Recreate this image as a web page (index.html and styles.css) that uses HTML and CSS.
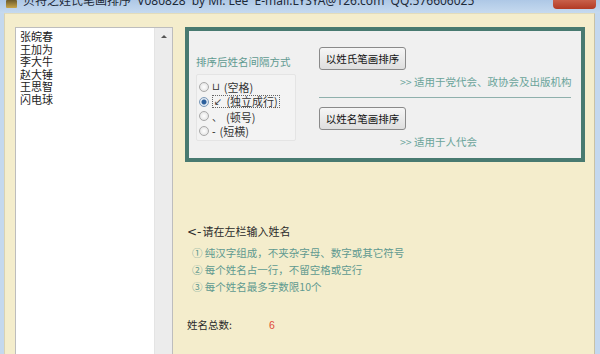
FILE: index.html
```html
<!DOCTYPE html>
<html lang="zh-CN">
<head>
    <meta charset="UTF-8">
    <title>贝特之姓氏笔画排序</title>
    <link rel="stylesheet" href="styles.css">
</head>
<body>
    <div class="window">
        <div class="titlebar">
            <span class="app-icon"></span>
            <span class="title">贝特之姓氏笔画排序&nbsp; V080828&nbsp; by Mr. Lee&nbsp; E-mail:LYSYA@126.com&nbsp; QQ:576606025</span>
            <span class="close-btn"></span>
        </div>

        <div class="client">
            <div class="listbox">
                <div class="names">
                    <div>张皖春</div>
                    <div>王加为</div>
                    <div>李大牛</div>
                    <div>赵大锤</div>
                    <div>王思智</div>
                    <div>闪电球</div>
                </div>
                <div class="scrollbar"><span class="arrow-up"></span></div>
            </div>

            <div class="main">
                <div class="frame">
                    <div class="sep-col">
                        <div class="sep-label">排序后姓名间隔方式</div>
                        <div class="radio-group">
                            <label class="radio"><span class="dot"></span><span class="sym">⊔</span><span class="opt">(空格)</span></label>
                            <label class="radio checked"><span class="dot"></span><span class="focus"><span class="sym">↙</span><span class="opt">(独立成行)</span></span></label>
                            <label class="radio"><span class="dot"></span><span class="sym">、</span><span class="opt">(顿号)</span></label>
                            <label class="radio"><span class="dot"></span><span class="sym">-</span><span class="opt">(短横)</span></label>
                        </div>
                    </div>
                    <div class="sort-col">
                        <button class="btn">以姓氏笔画排序</button>
                        <div class="note">&gt;&gt; 适用于党代会、政协会及出版机构</div>
                        <div class="divider"></div>
                        <button class="btn">以姓名笔画排序</button>
                        <div class="note">&gt;&gt; 适用于人代会</div>
                    </div>
                </div>

                <div class="hint"><span class="lt">&lt;-</span>请在左栏输入姓名</div>
                <ul class="rules">
                    <li>① 纯汉字组成，不夹杂字母、数字或其它符号</li>
                    <li>② 每个姓名占一行，不留空格或空行</li>
                    <li>③ 每个姓名最多字数限10个</li>
                </ul>

                <div class="total">
                    <span class="total-label">姓名总数:</span>
                    <span class="total-value">6</span>
                </div>
            </div>
        </div>
    </div>
</body>
</html>
```

FILE: styles.css
```css
body {
    margin: 0;
    width: 600px;
    height: 354px;
    overflow: hidden;
    background-color: #c4d8ee;
    font-family: "Noto Sans CJK SC", "Noto Sans", sans-serif;
}
.window {
    display: flex;
    flex-direction: column;
    height: 100%;
}
.titlebar {
    height: 13px;
    display: flex;
    align-items: flex-start;
    background: linear-gradient(#aec8e6, #c6daef);
    position: relative;
    overflow: hidden;
}
.app-icon {
    width: 11px;
    height: 8px;
    margin: 0 0 0 6px;
    background: linear-gradient(#6b5a2a, #c8a64a);
    border-radius: 1px;
}
.title {
    margin: -6px 0 0 6px;
    font-family: "Noto Sans", "Noto Sans CJK SC", sans-serif;
    font-size: 12px;
    line-height: 14px;
    color: #1e2a38;
    white-space: nowrap;
}
.close-btn {
    position: absolute;
    right: 4px;
    top: 0;
    width: 43px;
    height: 9px;
    border-radius: 0 0 4px 4px;
    background: linear-gradient(#c9604a, #b23a24);
}
.client {
    flex: 1;
    display: flex;
    margin: 0 5px 0 4px;
    padding: 13px 0 0 10px;
    background-color: #f4edcc;
    border-top: 1px solid #e2dcbc;
    border-left: 1px solid #d8d2b4;
    border-right: 1px solid #c8c2a6;
    min-height: 0;
}
.listbox {
    width: 156px;
    height: 340px;
    display: flex;
    background-color: white;
    border: 1px solid #bdbdbd;
    flex-shrink: 0;
}
.names {
    flex: 1;
    padding: 2px 4px;
    font-size: 11px;
    line-height: 12.6px;
    color: #222;
}
.scrollbar {
    width: 17px;
    background-color: #ececec;
    border-left: 1px solid #e4e4e4;
    display: flex;
    justify-content: center;
}
.arrow-up {
    margin-top: 7px;
    width: 0;
    height: 0;
    border-left: 3px solid transparent;
    border-right: 3px solid transparent;
    border-bottom: 3px solid #555;
}
.main {
    margin-left: 12px;
    display: flex;
    flex-direction: column;
}
.frame {
    width: 392px;
    height: 127px;
    border: 4px solid #487a70;
    background-color: #f0f0f0;
    display: flex;
    font-size: 10.5px;
}
.sep-col {
    width: 123px;
    padding: 24px 0 0 7px;
    box-sizing: border-box;
}
.sep-label {
    color: #5f9a90;
    line-height: 14px;
}
.radio-group {
    margin-top: 5px;
    width: 100px;
    height: 67px;
    padding: 5px 0 0 2px;
    box-sizing: border-box;
    border: 1px solid #e4e4e4;
    border-radius: 2px;
    background-color: #f3f3f3;
    display: flex;
    flex-direction: column;
    gap: 1px;
}
.radio {
    display: flex;
    align-items: center;
    height: 13.8px;
    font-size: 11px;
    color: #333;
    white-space: nowrap;
}
.dot {
    width: 10px;
    height: 10px;
    margin-right: 3px;
    border-radius: 50%;
    border: 1px solid #a8a8a8;
    background: radial-gradient(#ffffff, #dcdcdc);
    box-sizing: border-box;
    flex-shrink: 0;
}
.checked .dot {
    background: radial-gradient(#2c5f9c 0, #2c5f9c 2px, #dfe8f2 3px);
    border-color: #7a98b8;
}
.focus {
    display: flex;
    align-items: center;
    border: 1px dotted #666;
    padding: 0 1px;
    line-height: 11px;
}
.sym {
    font-family: "DejaVu Sans", sans-serif;
    font-size: 10px;
}
.opt {
    margin-left: 4px;
}
.sort-col {
    padding: 16px 0 0 7px;
    display: flex;
    flex-direction: column;
    align-items: flex-start;
}
.btn {
    width: 87px;
    height: 23px;
    padding: 0;
    font-family: inherit;
    font-size: 10.5px;
    color: #111;
    border: 1px solid #8a8a8a;
    border-radius: 3px;
    background: linear-gradient(#f6f6f6, #dedede);
}
.note {
    margin: 5px 0 0 81px;
    color: #6aa49a;
    line-height: 14px;
    white-space: nowrap;
}
.divider {
    width: 252px;
    height: 1px;
    margin: 8px 0 9px;
    background-color: #8fb0ac;
}
.hint {
    margin: 62px 0 0 2px;
    font-size: 11px;
    color: #2a2a2a;
    line-height: 14px;
}
.lt {
    font-family: "DejaVu Sans", sans-serif;
    font-size: 12px;
    margin-right: 1px;
}
.rules {
    list-style: none;
    margin: 5px 0 0 7px;
    padding: 0;
    font-size: 10.5px;
    line-height: 17px;
    color: #5f9a90;
}
.total {
    margin: 23px 0 0 2px;
    font-size: 10.5px;
    line-height: 14px;
    display: flex;
}
.total-label {
    width: 82px;
    color: #2a2a2a;
}
.total-value {
    color: #e04a3a;
    font-family: "Liberation Sans", sans-serif;
}
```
